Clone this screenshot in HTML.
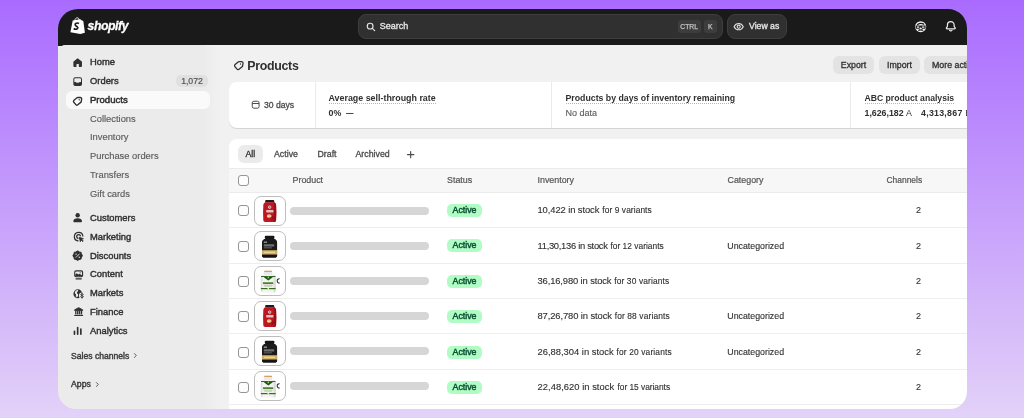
<!DOCTYPE html>
<html lang="en">
<head>
<meta charset="utf-8">
<title>Products · Shopify</title>
<style>
*{box-sizing:border-box;margin:0;padding:0}
html,body{width:1024px;height:418px;overflow:hidden}
body{background:linear-gradient(180deg,#a96bff 0%,#e3d2f8 100%);font-family:"Liberation Sans",sans-serif;color:#303030;position:relative}
#win{transform:translateZ(0);will-change:transform;position:absolute;left:0;top:0;width:1024px;height:418px;clip-path:inset(9px 57px 9px 58px round 20px 19px 17px 18px);background:#f1f1f1}
.abs{position:absolute;white-space:nowrap}
#top{position:absolute;left:58px;top:9px;width:909px;height:37px;background:#1a1a1a}
#side{position:absolute;left:58px;top:45px;width:147px;height:364px;background:#ebebeb;border-top-left-radius:8px}
#sidefade{position:absolute;left:204px;top:46px;width:15px;height:363px;background:linear-gradient(90deg,#ebebeb,#f1f1f1)}
#mainbg{position:absolute;left:58px;top:45px;width:909px;height:364px;background:#f1f1f1;border-top-left-radius:8px}
.t{position:absolute;white-space:nowrap;line-height:12px;height:12px}
.nav{font-size:9.4px;color:#303030;-webkit-text-stroke:0.4px #303030}
.sub{font-size:9.35px;color:#5c5c5c;-webkit-text-stroke:0.15px #5c5c5c}
.card{position:absolute;background:#fff}
.hd{font-size:8.9px;color:#555;-webkit-text-stroke-width:0.2px}
.cell{font-size:9px;color:#303030;-webkit-text-stroke-width:.12px}
.badge{position:absolute;left:447px;width:35px;height:13px;border-radius:5px;background:#b0fcc4;color:#0c5132;font-size:8.8px;-webkit-text-stroke-width:0.45px;line-height:13px;text-align:center}
.cb{position:absolute;left:238px;width:11px;height:11px;border:1px solid #959595;border-radius:3px;background:#fdfdfd}
.th{position:absolute;left:254.2px;width:32px;height:29.8px;border:1px solid #bdbdbd;border-radius:7px;background:#fff;overflow:hidden}
.bar{position:absolute;left:290px;width:139px;height:8px;border-radius:4px;background:#d6d6d6}
.sep{position:absolute;left:229px;width:738px;height:1px;background:#eeeeee}
.btn{position:absolute;top:56px;height:18px;border-radius:6px;background:#e3e3e3;font-size:8.8px;color:#303030;line-height:18px;text-align:center;-webkit-text-stroke-width:0.3px}
</style>
</head>
<body>
<div id="win">
<div id="top"></div>
<div id="mainbg"></div>
<div id="side"></div>
<div id="sidefade"></div>

<!-- TOPBAR -->
<div class="t" style="left:87.6px;top:19.4px;font-size:12.2px;font-weight:bold;font-style:italic;color:#fff;line-height:15px;height:15px;letter-spacing:-0.4px;-webkit-text-stroke:0.3px #fff">shopify</div>
<div class="abs" id="search" style="left:358px;top:14px;width:365px;height:25px;border-radius:8px;background:#303030;border:1px solid #3e3e3e"></div>
<div class="t" style="left:379.8px;top:20px;font-size:9px;color:#e3e3e3;-webkit-text-stroke-width:0.35px">Search</div>
<div class="abs" style="left:677.5px;top:20px;width:23.300px;height:13px;border-radius:3px;background:#3d3d3d;color:#c4c4c4;font-size:6.800px;-webkit-text-stroke-width:.25px;line-height:13.500px;text-align:center">CTRL</div>
<div class="abs" style="left:703.500px;top:20px;width:13.400px;height:13px;border-radius:3px;background:#3d3d3d;color:#c4c4c4;font-size:6.800px;-webkit-text-stroke-width:.25px;line-height:13.500px;text-align:center">K</div>
<div class="abs" style="left:727px;top:14px;width:60px;height:25px;border-radius:8px;background:#303030;border:1px solid #3e3e3e"></div>
<div class="t" style="left:749px;top:20.3px;font-size:8.7px;color:#e3e3e3;-webkit-text-stroke-width:0.35px">View as</div>

<!-- SIDEBAR -->
<div class="abs" style="left:66px;top:91px;width:144px;height:18px;border-radius:6px;background:#fafafa"></div>
<div class="t nav" style="left:90px;top:56.2px">Home</div>
<div class="t nav" style="left:90px;top:75.0px">Orders</div>
<div class="abs" style="left:176px;top:75px;width:32px;height:12px;border-radius:5px;background:#e0e0e0;color:#555;font-size:8.7px;-webkit-text-stroke-width:.2px;line-height:12px;text-align:center">1,072</div>
<div class="t nav" style="left:90px;top:93.8px;font-size:9.55px;-webkit-text-stroke-width:.5px">Products</div>
<div class="t sub" style="left:90px;top:112.6px">Collections</div>
<div class="t sub" style="left:90px;top:131.4px">Inventory</div>
<div class="t sub" style="left:90px;top:150.2px">Purchase orders</div>
<div class="t sub" style="left:90px;top:169.0px">Transfers</div>
<div class="t sub" style="left:90px;top:187.8px">Gift cards</div>
<div class="t nav" style="left:90px;top:211.9px">Customers</div>
<div class="t nav" style="left:90px;top:230.7px">Marketing</div>
<div class="t nav" style="left:90px;top:249.5px">Discounts</div>
<div class="t nav" style="left:90px;top:268.3px">Content</div>
<div class="t nav" style="left:90px;top:287.1px">Markets</div>
<div class="t nav" style="left:90px;top:305.9px">Finance</div>
<div class="t nav" style="left:90px;top:324.7px">Analytics</div>
<div class="t" style="left:71px;top:349.9px;font-size:8.6px;color:#3a3a3a;-webkit-text-stroke:0.4px #3a3a3a">Sales channels</div>
<div class="t" style="left:71px;top:378.2px;font-size:8.7px;color:#3a3a3a;-webkit-text-stroke:0.4px #3a3a3a">Apps</div>

<!-- PAGE HEADER -->
<div class="t" style="left:247.2px;top:58.6px;font-size:12.4px;font-weight:bold;color:#303030;line-height:14px;height:14px;letter-spacing:-0.3px">Products</div>
<div class="btn" style="left:833px;width:41px">Export</div>
<div class="btn" style="left:879px;width:41px">Import</div>
<div class="btn" style="left:924px;width:80px;text-align:left;padding-left:8px">More actions</div>

<!-- STATS CARD -->
<div class="card" style="left:229px;top:82.4px;width:760px;height:45.4px;border-radius:8px;box-shadow:0 1px 0 #d4d4d4"></div>
<div class="abs" style="left:315px;top:82px;width:1px;height:46px;background:#ebebeb"></div>
<div class="abs" style="left:551px;top:82px;width:1px;height:46px;background:#ebebeb"></div>
<div class="abs" style="left:850px;top:82px;width:1px;height:46px;background:#ebebeb"></div>
<div class="t" style="left:264px;top:99.15px;font-size:8.6px;color:#4a4a4a;-webkit-text-stroke-width:0.3px">30 days</div>
<div class="t" style="left:328.5px;top:92px;font-size:8.9px;font-weight:bold;border-bottom:1px dotted #b5b5b5;height:12.3px">Average sell-through rate</div>
<div class="t" style="left:328.5px;top:107px;font-size:8.9px;font-weight:bold">0%&nbsp; <span style="font-weight:normal;color:#4a4a4a;font-size:7px;position:relative;top:-1px;-webkit-text-stroke-width:.3px">—</span></div>
<div class="t" style="left:565.5px;top:92px;font-size:8.75px;font-weight:bold;border-bottom:1px dotted #b5b5b5;height:12.3px">Products by days of inventory remaining</div>
<div class="t" style="left:565.5px;top:107px;font-size:9px;color:#616161;-webkit-text-stroke-width:.15px">No data</div>
<div class="t" style="left:864.5px;top:92px;font-size:8.65px;font-weight:bold;border-bottom:1px dotted #b5b5b5;height:12.3px">ABC product analysis</div>
<div class="t" style="left:864.5px;top:107px;font-size:8.8px;font-weight:bold">1,626,182 <span style="font-weight:normal;letter-spacing:0">A</span></div>
<div class="t" style="left:921px;top:107px;font-size:8.8px;font-weight:bold;letter-spacing:.27px">4,313,867 <span style="font-weight:normal;letter-spacing:0">B</span></div>

<!-- TABLE CARD -->
<div class="card" style="left:229px;top:139px;width:760px;height:290px;border-radius:8px 0 0 0"></div>
<div class="abs" style="left:237.5px;top:145px;width:25.5px;height:18px;border-radius:6px;background:#ebebeb"></div>
<div class="t" style="left:245.5px;top:148px;font-size:8.8px;color:#303030;-webkit-text-stroke-width:0.3px">All</div>
<div class="t" style="left:274px;top:148px;font-size:8.8px;color:#4a4a4a;-webkit-text-stroke-width:0.3px">Active</div>
<div class="t" style="left:317.5px;top:148px;font-size:8.8px;color:#4a4a4a;-webkit-text-stroke-width:0.3px">Draft</div>
<div class="t" style="left:355.5px;top:148px;font-size:8.8px;color:#4a4a4a;-webkit-text-stroke-width:0.3px">Archived</div>
<div class="abs" style="left:229px;top:168px;width:738px;height:25px;background:#f7f7f7;border-top:1px solid #ebebeb;border-bottom:1px solid #ebebeb"></div>
<div class="cb" style="top:175px"></div>
<div class="t hd" style="left:292.5px;top:174.1px">Product</div>
<div class="t hd" style="left:447px;top:174.1px">Status</div>
<div class="t hd" style="left:537.5px;top:174.1px">Inventory</div>
<div class="t hd" style="left:727.5px;top:174.1px">Category</div>
<div class="t hd" style="left:886.5px;top:174.1px;font-size:8.45px">Channels</div>

<svg class="abs" style="left:71.43px;top:55.63px" width="13.33" height="13.33" viewBox="0 0 20 20" ><path fill="#303030" stroke="#303030" stroke-width="1.6" stroke-linejoin="round" d="M10 4.2 L15.6 8.8 V15 a.6 .6 0 0 1-.6 .6 H12.6 V12.6 a1.300 1.300 0 0 0-1.300-1.300 H8.700 a1.300 1.300 0 0 0-1.300 1.300 V15.600 H5 a.6 .6 0 0 1-.6-.6 V8.800 Z"/></svg>
<svg class="abs" style="left:71.43px;top:74.63px" width="13.33" height="13.33" viewBox="0 0 20 20" ><path fill="#303030" fill-rule="evenodd" d="M3.5 6.25A2.75 2.75 0 0 1 6.25 3.5h7.5A2.75 2.75 0 0 1 16.5 6.25v7.5a2.75 2.75 0 0 1-2.75 2.75h-7.5A2.75 2.75 0 0 1 3.5 13.75Z M5 6.25C5 5.56 5.56 5 6.25 5h7.5C14.44 5 15 5.56 15 6.25V10.5h-1.8c-.55 0-1.05.3-1.3.8l-.05.1a.5.5 0 0 1-.45.3H8.6a.5.5 0 0 1-.45-.3l-.05-.1c-.25-.5-.75-.8-1.3-.8H5Z"/></svg>
<svg class="abs" style="left:71.40px;top:93.60px" width="13.8" height="13.8" viewBox="0 0 20 20" ><g transform="rotate(-40 10 10)" fill="none" stroke="#303030" stroke-width="1.95" stroke-linejoin="round"><path d="M4.200 7.700a2 2 0 0 1 2-2h5.600c.5 0 1 .2 1.400 .5l2.600 2.300a2 2 0 0 1 0 3l-2.600 2.300c-.4 .3-.9 .5-1.400 .5H6.200a2 2 0 0 1-2-2Z"/><circle cx="12.400" cy="10" r=".5" fill="#303030" stroke-width="1"/></g></svg>
<svg class="abs" style="left:71.43px;top:211.44px" width="13.33" height="13.33" viewBox="0 0 20 20" ><circle cx="10" cy="6.400" r="3.300" fill="#303030"/><path fill="#303030" d="M3.500 15.300c0-3 2.800-4.600 6.500-4.600s6.500 1.600 6.500 4.600c0 1-.7 1.600-1.600 1.600H5.100c-.9 0-1.600-.6-1.600-1.600Z"/></svg>
<svg class="abs" style="left:71.63px;top:230.34px" width="13.33" height="13.33" viewBox="0 0 20 20" ><g fill="none" stroke="#303030" stroke-width="1.900" stroke-linecap="round"><path d="M16.300 9A6.400 6.400 0 1 0 9 16.300"/><path d="M12.600 8.800A2.900 2.900 0 1 0 8.800 12.600"/></g><path fill="#303030" stroke="#303030" stroke-width="1.200" stroke-linejoin="round" d="M10.800 10.800l6.300 2.200-2.500 1.200 2.300 2.300-.9 .9-2.300-2.300-1.200 2.500Z"/></svg>
<svg class="abs" style="left:71.33px;top:248.94px" width="13.33" height="13.33" viewBox="0 0 20 20" ><path d="M10.00 3.10 L12.26 4.55 L14.88 5.12 L15.45 7.74 L16.90 10.00 L15.45 12.26 L14.88 14.88 L12.26 15.45 L10.00 16.90 L7.74 15.45 L5.12 14.88 L4.55 12.26 L3.10 10.00 L4.55 7.74 L5.12 5.12 L7.74 4.55Z" fill="#303030" stroke="#303030" stroke-width="1.800" stroke-linejoin="round"/><g stroke="#ebebeb" stroke-width="1.300" stroke-linecap="round"><path d="M7.6 12.4l4.8-4.8"/></g><circle cx="7.6" cy="7.7" r="1.05" fill="#ebebeb"/><circle cx="12.4" cy="12.3" r="1.05" fill="#ebebeb"/></svg>
<svg class="abs" style="left:71.63px;top:267.63px" width="13.33" height="13.33" viewBox="0 0 20 20" ><rect x="3.300" y="3.500" width="13.400" height="10.400" rx="2.600" fill="#303030"/><rect x="5" y="5.200" width="10" height="7" rx="1.200" fill="#ebebeb"/><path d="M5 12.200V9.800l2.200-1.900 2.300 2 1.700-1.300 3.800 2.400v1.200Z" fill="#303030"/><circle cx="12.300" cy="7.100" r=".9" fill="#303030"/><path d="M6 16.300h8" stroke="#303030" stroke-width="1.600" stroke-linecap="round"/></svg>
<svg class="abs" style="left:71.83px;top:286.63px" width="13.33" height="13.33" viewBox="0 0 20 20" ><circle cx="8.800" cy="10.200" r="6.700" fill="#303030"/><path fill="#ebebeb" d="M8.600 4.200c1.300 1.300 .3 2.600-.8 3.400-1 .8-.5 1.800 .4 2.500 1.300 1 1.400 2.400 .5 3.700l-1.300 1.900c-.9-.5-1.500-1.200-1.900-2.100 .9-1.200 .9-2.200-.1-3-1.200-1-1.500-2.300-.7-3.600 .6-1 1.800-2.100 3.900-2.800Z"/><circle cx="15" cy="13" r="4.600" fill="#ebebeb"/><path d="M16.900 11.300c-.3-.7-1-1.100-1.900-1.100-1.100 0-1.900 .6-1.900 1.400 0 1.900 3.900 .8 3.900 2.800 0 .8-.8 1.400-2 1.400-1 0-1.800-.5-2.100-1.200" fill="none" stroke="#303030" stroke-width="1.350" stroke-linecap="round"/><path d="M15 8.900v8" stroke="#303030" stroke-width="1.200" stroke-linecap="round"/></svg>
<svg class="abs" style="left:71.63px;top:304.83px" width="13.33" height="13.33" viewBox="0 0 20 20" ><path fill="#303030" stroke="#303030" stroke-width="1.400" stroke-linejoin="round" d="M10 4l6 3.200v1H4V7.200Z"/><g stroke="#303030" stroke-width="2"><path d="M5.700 9v5M8.600 9v5M11.400 9v5M14.300 9v5"/></g><path d="M4.200 15.500h11.600" stroke="#303030" stroke-width="2.100" stroke-linecap="round"/></svg>
<svg class="abs" style="left:71.43px;top:323.94px" width="13.33" height="13.33" viewBox="0 0 20 20" ><g stroke="#303030" stroke-width="2.500" stroke-linecap="round"><path d="M5.200 11v4.300M10 5.400v9.900M14.800 7.800v7.500"/></g></svg>
<svg class="abs" style="left:129.70px;top:350.10px" width="11" height="11" viewBox="0 0 20 20" ><path d="M8 6.500l3.500 3.500-3.500 3.500" fill="none" stroke="#4a4a4a" stroke-width="1.600" stroke-linecap="round" stroke-linejoin="round"/></svg>
<svg class="abs" style="left:91.70px;top:378.80px" width="11" height="11" viewBox="0 0 20 20" ><path d="M8 6.500l3.500 3.500-3.500 3.500" fill="none" stroke="#4a4a4a" stroke-width="1.600" stroke-linecap="round" stroke-linejoin="round"/></svg>
<svg class="abs" style="left:232.05px;top:58.15px" width="14.3" height="14.3" viewBox="0 0 20 20" ><g transform="rotate(-40 10 10)" fill="none" stroke="#303030" stroke-width="1.8" stroke-linejoin="round"><path d="M4.200 7.700a2 2 0 0 1 2-2h5.600c.5 0 1 .2 1.400 .5l2.600 2.300a2 2 0 0 1 0 3l-2.600 2.300c-.4 .3-.9 .5-1.400 .5H6.200a2 2 0 0 1-2-2Z"/><circle cx="12.400" cy="10" r=".5" fill="#303030" stroke-width="1"/></g></svg>
<svg class="abs" style="left:248.64px;top:98.33px" width="13.33" height="13.33" viewBox="0 0 20 20" ><g fill="none" stroke="#4a4a4a" stroke-width="1.500"><rect x="4.900" y="4.900" width="10.200" height="10.400" rx="2.400"/><path d="M4.900 8.300h10.200"/></g></svg>
<svg class="abs" style="left:404.33px;top:147.64px" width="13.33" height="13.33" viewBox="0 0 20 20" ><path d="M10 5.300v9.400M5.300 10h9.400" stroke="#4a4a4a" stroke-width="1.700" stroke-linecap="round"/></svg>
<svg class="abs" style="left:364.13px;top:19.64px" width="13.33" height="13.33" viewBox="0 0 20 20" ><g fill="none" stroke="#e3e3e3" stroke-width="1.750" stroke-linecap="round"><circle cx="9.200" cy="9.200" r="4.300"/><path d="M12.500 12.500l3.500 3.500"/></g></svg>
<svg class="abs" style="left:732.44px;top:20.14px" width="13.33" height="13.33" viewBox="0 0 20 20" ><g fill="none" stroke="#e3e3e3" stroke-width="1.600" stroke-linejoin="round"><path d="M3.100 10C4.600 6.900 7.100 5.300 10 5.300S15.400 6.900 16.900 10C15.400 13.100 12.900 14.700 10 14.700S4.600 13.100 3.100 10Z"/><circle cx="10" cy="10" r="2.300"/></g></svg>
<svg class="abs" style="left:913.84px;top:19.64px" width="13.33" height="13.33" viewBox="0 0 20 20" ><circle cx="10" cy="10" r="8.300" fill="#f3f3f3"/><path d="M2.600 8.400h14.800v3.600c0 .6-.5 1.100-1.100 1.100h-4.200c-.7 0-1.300-.6-1.300-1.300v-.5h-1.600v.5c0 .7-.6 1.300-1.300 1.300H3.700c-.6 0-1.100-.5-1.100-1.100Z" fill="#1a1a1a"/><rect x="4.300" y="9.800" width="3.600" height="1.900" rx=".5" fill="#f3f3f3"/><rect x="12.100" y="9.800" width="3.600" height="1.900" rx=".5" fill="#f3f3f3"/><path d="M5.400 6.800c2.800-2 6.200-2.200 9.200-.6" fill="none" stroke="#1a1a1a" stroke-width="1.900" stroke-linecap="round"/><path d="M5.800 15.700c1.100-1.900 2.600-2.400 4.200-1.300 1.600-1.100 3.100-.6 4.200 1.300-1.400 .8-2.800 .7-4.200-.1-1.400 .8-2.800 .9-4.200 .1Z" fill="#1a1a1a"/></svg>
<svg class="abs" style="left:943.70px;top:19.20px" width="13.6" height="13.6" viewBox="0 0 20 20" ><g fill="none" stroke="#ededed" stroke-width="1.800" stroke-linejoin="round" stroke-linecap="round"><path d="M10 4c-2.900 0-4.900 2-4.900 4.600v1.600c0 .9-.4 1.600-1.200 2.200-1 .8-.5 2.100 .8 2.100h10.600c1.300 0 1.800-1.300 .8-2.100-.8-.6-1.200-1.300-1.200-2.200v-1.600c0-2.600-2-4.600-4.900-4.600Z"/><path d="M8.200 16.600c.4 .6 1 .9 1.800 .9s1.400-.3 1.800-.9"/></g></svg>
<svg class="abs" style="left:70.1px;top:17.4px" width="15.5" height="17.6" viewBox="0 0 15.5 17.6"><path fill="#fff" d="M2.7 3.5 9.9 2.2c.3 0 .5 0 .7 .2l1.300 1.200 1 .1c.2 0 .3 .2 .4 .4l1.600 11.600-4.600 1.300L.4 15.300Z"/><path d="M4.700 3.600c.3-1.600 1.300-2.700 2.500-2.800 1.100-.1 1.800 .8 2 2.300" fill="none" stroke="#fff" stroke-width=".9"/><path d="M9 6.400c-.8-.4-1.800-.5-2.700-.2-1.100 .4-1.400 1.400-.8 2.200 .5 .7 1.700 .9 2.100 1.700 .5 .9-.1 1.900-1.200 2.100-1 .2-1.900-.1-2.700-.7" fill="none" stroke="#1a1a1a" stroke-width="1.700"/></svg>
<div class="cb" style="top:205.1px"></div>
<div class="th" style="top:196.0px"><svg width="30" height="28" viewBox="0 0 30 28" style="position:absolute;left:0;top:0"><rect x="10.200" y="2.900" width="9" height="2.700" rx=".9" fill="#1c1c1c"/><path d="M10.100 5.300h9.200c1.400 .9 1.800 1.800 1.800 3.100 .3 4.800 .3 9.600 0 14.400 0 1.400-.7 2.200-2 2.200h-8.800c-1.300 0-2-.8-2-2.200-.3-4.800-.3-9.600 0-14.400 0-1.300 .4-2.200 1.800-3.100Z" fill="#be1720"/><path d="M19.300 5.300c1.400 .9 1.800 1.800 1.800 3.100 .3 4.800 .3 9.600 0 14.400 0 1.400-.7 2.200-2 2.200h-1.500c.9-.3 1.400-1 1.400-2.200V8.300c0-1.300-.2-2.200-1-3Z" fill="#9a0f17"/><path d="M16.500 18.500c1.500-.3 2.500 .5 2.500 2 0 1.500-1 2.700-2.500 3Z" fill="#8a0d14" opacity=".7"/><circle cx="14.700" cy="10.100" r="1.600" fill="#f4f0f0"/><circle cx="14.900" cy="10" r=".75" fill="#2a2a3a"/><rect x="11.200" y="13" width="7.200" height="2.400" rx=".4" fill="#f3dcdc" opacity=".85"/><ellipse cx="14.200" cy="19" rx="2.400" ry="1.700" fill="#e9c98a"/><ellipse cx="13.200" cy="19.600" rx="1" ry=".7" fill="#f6e7c0"/></svg></div>
<div class="bar" style="top:206.9px"></div>
<div class="badge" style="top:203.9px">Active</div>
<div class="t cell" style="left:537.5px;top:203.84px;font-size:9.4px;letter-spacing:-0.089px">10,422 in stock<span style="font-size:8.4px;letter-spacing:0.075px;margin-left:3.10px">for 9 variants</span></div>
<div class="t cell" style="left:916px;top:203.98px">2</div>
<div class="sep" style="top:227.1px"></div>
<div class="cb" style="top:240.5px"></div>
<div class="th" style="top:231.0px"><svg width="30" height="28" viewBox="0 0 30 28" style="position:absolute;left:0;top:0"><rect x="9.800" y="3.800" width="9.600" height="3.300" rx="1" fill="#161616"/><path d="M9.300 6.900h10.600c1.600 .9 2.200 1.900 2.200 3.300v13c0 1.500-.8 2.400-2.300 2.400H9.300c-1.500 0-2.300-.9-2.300-2.400V10.200c0-1.400 .7-2.400 2.300-3.300Z" fill="#1b1b1b"/><rect x="8.800" y="9.700" width="3.200" height=".9" fill="#d8d8d8"/><rect x="8.800" y="12.200" width="10.400" height="2.200" rx=".3" fill="#8e8e8e" opacity=".75"/><rect x="8.800" y="15.200" width="8" height="1.200" fill="#777" opacity=".7"/><rect x="7" y="18.200" width="15.100" height="4.500" fill="#d2ad62"/><rect x="8.800" y="19.600" width="11.200" height="1.500" fill="#f0dca8" opacity=".8"/><path d="M7 22.700h15.100v.5c0 1.500-.8 2.400-2.300 2.400H9.300c-1.500 0-2.300-.9-2.300-2.400Z" fill="#141414"/></svg></div>
<div class="bar" style="top:241.9px"></div>
<div class="badge" style="top:239.3px">Active</div>
<div class="t cell" style="left:537.5px;top:239.84px;font-size:9.4px;letter-spacing:-0.295px">11,30,136 in stock<span style="font-size:8.4px;letter-spacing:0.018px;margin-left:2.80px">for 12 variants</span></div>
<div class="t cell" style="left:727.3px;top:240.05px;font-size:8.8px">Uncategorized</div>
<div class="t cell" style="left:916px;top:239.98px">2</div>
<div class="sep" style="top:262.5px"></div>
<div class="cb" style="top:276.0px"></div>
<div class="th" style="top:266.1px"><svg width="30" height="28" viewBox="0 0 30 28" style="position:absolute;left:0;top:0"><defs><linearGradient id="wj2" x1="0" x2="1" y1="0" y2="0"><stop offset="0" stop-color="#d9d9d6"/><stop offset=".18" stop-color="#f4f4f1"/><stop offset=".8" stop-color="#f1f1ee"/><stop offset="1" stop-color="#cfcfcc"/></linearGradient></defs><rect x="9.200" y="3.700" width="7.800" height="1.200" rx=".5" fill="#d8822c"/><rect x="8.800" y="4.800" width="8.600" height="3.200" rx=".6" fill="#e9e8f1"/><path d="M8.200 7.800h9.800c1.900 .7 2.700 1.600 2.700 2.900v12.600c0 1.500-.8 2.300-2.200 2.300H8c-1.400 0-2.200-.8-2.200-2.300V10.700c0-1.300 .6-2.200 2.400-2.900Z" fill="url(#wj2)"/><path d="M6 9h14.500v1.100H6Z" fill="#2f6e1f"/><path d="M8.600 10h9.400l-4.700 3.600Z" fill="#20521a"/><circle cx="13.300" cy="10.400" r=".85" fill="#9ad04a"/><rect x="7.900" y="15.300" width="10.400" height="1.600" rx=".3" fill="#4d8235"/><rect x="8.600" y="17.700" width="9" height=".9" fill="#a9bf9b"/><rect x="9.400" y="19.100" width="7.400" height=".8" fill="#c4d0bb"/><rect x="5.900" y="21" width="14.700" height="1.200" fill="#2f6e1f"/><circle cx="13.300" cy="21.600" r=".9" fill="#ece6b4"/><path d="M24.600 11.800c-1.500-.3-2.500 .8-2.400 2.200 .1 1.400 1.200 2.300 2.500 2" fill="none" stroke="#2a2a33" stroke-width="1.100"/></svg></div>
<div class="bar" style="top:277.0px"></div>
<div class="badge" style="top:274.8px">Active</div>
<div class="t cell" style="left:537.5px;top:274.84px;font-size:9.4px;letter-spacing:-0.122px">36,16,980 in stock<span style="font-size:8.4px;letter-spacing:0.138px;margin-left:2.80px">for 30 variants</span></div>
<div class="t cell" style="left:916px;top:274.98px">2</div>
<div class="sep" style="top:298.0px"></div>
<div class="cb" style="top:311.4px"></div>
<div class="th" style="top:301.1px"><svg width="30" height="28" viewBox="0 0 30 28" style="position:absolute;left:0;top:0"><rect x="10.200" y="2.900" width="9" height="2.700" rx=".9" fill="#1c1c1c"/><path d="M10.100 5.300h9.200c1.400 .9 1.800 1.800 1.800 3.100 .3 4.800 .3 9.600 0 14.400 0 1.400-.7 2.200-2 2.200h-8.800c-1.300 0-2-.8-2-2.200-.3-4.800-.3-9.600 0-14.400 0-1.300 .4-2.200 1.800-3.100Z" fill="#be1720"/><path d="M19.300 5.300c1.400 .9 1.800 1.800 1.800 3.100 .3 4.800 .3 9.600 0 14.400 0 1.400-.7 2.200-2 2.200h-1.500c.9-.3 1.400-1 1.400-2.200V8.300c0-1.300-.2-2.200-1-3Z" fill="#9a0f17"/><path d="M16.500 18.500c1.500-.3 2.500 .5 2.500 2 0 1.500-1 2.700-2.500 3Z" fill="#8a0d14" opacity=".7"/><circle cx="14.700" cy="10.100" r="1.600" fill="#f4f0f0"/><circle cx="14.900" cy="10" r=".75" fill="#2a2a3a"/><rect x="11.200" y="13" width="7.200" height="2.400" rx=".4" fill="#f3dcdc" opacity=".85"/><ellipse cx="14.200" cy="19" rx="2.400" ry="1.700" fill="#e9c98a"/><ellipse cx="13.200" cy="19.600" rx="1" ry=".7" fill="#f6e7c0"/></svg></div>
<div class="bar" style="top:312.0px"></div>
<div class="badge" style="top:310.2px">Active</div>
<div class="t cell" style="left:537.5px;top:309.84px;font-size:9.4px;letter-spacing:-0.094px">87,26,780 in stock<span style="font-size:8.4px;letter-spacing:0.131px;margin-left:2.80px">for 88 variants</span></div>
<div class="t cell" style="left:727.3px;top:310.05px;font-size:8.8px">Uncategorized</div>
<div class="t cell" style="left:916px;top:309.98px">2</div>
<div class="sep" style="top:333.4px"></div>
<div class="cb" style="top:346.8px"></div>
<div class="th" style="top:336.2px"><svg width="30" height="28" viewBox="0 0 30 28" style="position:absolute;left:0;top:0"><rect x="9.800" y="3.800" width="9.600" height="3.300" rx="1" fill="#161616"/><path d="M9.300 6.900h10.600c1.600 .9 2.200 1.900 2.200 3.300v13c0 1.500-.8 2.400-2.300 2.400H9.300c-1.500 0-2.300-.9-2.300-2.400V10.200c0-1.400 .7-2.400 2.300-3.300Z" fill="#1b1b1b"/><rect x="8.800" y="9.700" width="3.200" height=".9" fill="#d8d8d8"/><rect x="8.800" y="12.200" width="10.400" height="2.200" rx=".3" fill="#8e8e8e" opacity=".75"/><rect x="8.800" y="15.200" width="8" height="1.200" fill="#777" opacity=".7"/><rect x="7" y="18.200" width="15.100" height="4.500" fill="#d2ad62"/><rect x="8.800" y="19.600" width="11.200" height="1.500" fill="#f0dca8" opacity=".8"/><path d="M7 22.700h15.100v.5c0 1.500-.8 2.400-2.300 2.400H9.300c-1.500 0-2.300-.9-2.300-2.400Z" fill="#141414"/></svg></div>
<div class="bar" style="top:347.1px"></div>
<div class="badge" style="top:345.6px">Active</div>
<div class="t cell" style="left:537.5px;top:345.84px;font-size:9.4px;letter-spacing:0.006px">26,88,304 in stock<span style="font-size:8.4px;letter-spacing:0.145px;margin-left:2.80px">for 20 variants</span></div>
<div class="t cell" style="left:727.3px;top:346.05px;font-size:8.8px">Uncategorized</div>
<div class="t cell" style="left:916px;top:345.98px">2</div>
<div class="sep" style="top:368.8px"></div>
<div class="cb" style="top:382.2px"></div>
<div class="th" style="top:371.2px"><svg width="30" height="28" viewBox="0 0 30 28" style="position:absolute;left:0;top:0"><defs><linearGradient id="wj5" x1="0" x2="1" y1="0" y2="0"><stop offset="0" stop-color="#d9d9d6"/><stop offset=".18" stop-color="#f4f4f1"/><stop offset=".8" stop-color="#f1f1ee"/><stop offset="1" stop-color="#cfcfcc"/></linearGradient></defs><rect x="9.200" y="3.700" width="7.800" height="1.200" rx=".5" fill="#d8822c"/><rect x="8.800" y="4.800" width="8.600" height="3.200" rx=".6" fill="#e9e8f1"/><path d="M8.200 7.800h9.800c1.900 .7 2.700 1.600 2.700 2.900v12.600c0 1.500-.8 2.300-2.200 2.300H8c-1.400 0-2.200-.8-2.200-2.300V10.700c0-1.300 .6-2.200 2.400-2.900Z" fill="url(#wj5)"/><path d="M6 9h14.500v1.100H6Z" fill="#2f6e1f"/><path d="M8.600 10h9.400l-4.700 3.600Z" fill="#20521a"/><circle cx="13.300" cy="10.400" r=".85" fill="#9ad04a"/><rect x="7.900" y="15.300" width="10.400" height="1.600" rx=".3" fill="#4d8235"/><rect x="8.600" y="17.700" width="9" height=".9" fill="#a9bf9b"/><rect x="9.400" y="19.100" width="7.400" height=".8" fill="#c4d0bb"/><rect x="5.900" y="21" width="14.700" height="1.200" fill="#2f6e1f"/><circle cx="13.300" cy="21.600" r=".9" fill="#ece6b4"/><path d="M24.600 11.800c-1.500-.3-2.500 .8-2.400 2.200 .1 1.400 1.200 2.300 2.500 2" fill="none" stroke="#2a2a33" stroke-width="1.100"/></svg></div>
<div class="bar" style="top:382.1px"></div>
<div class="badge" style="top:381.1px">Active</div>
<div class="t cell" style="left:537.5px;top:380.84px;font-size:9.4px;letter-spacing:0.033px">22,48,620 in stock<span style="font-size:8.4px;letter-spacing:-0.035px;margin-left:3.30px">for 15 variants</span></div>
<div class="t cell" style="left:916px;top:380.98px">2</div>
<div class="sep" style="top:404.2px"></div>
</div>
</body>
</html>
